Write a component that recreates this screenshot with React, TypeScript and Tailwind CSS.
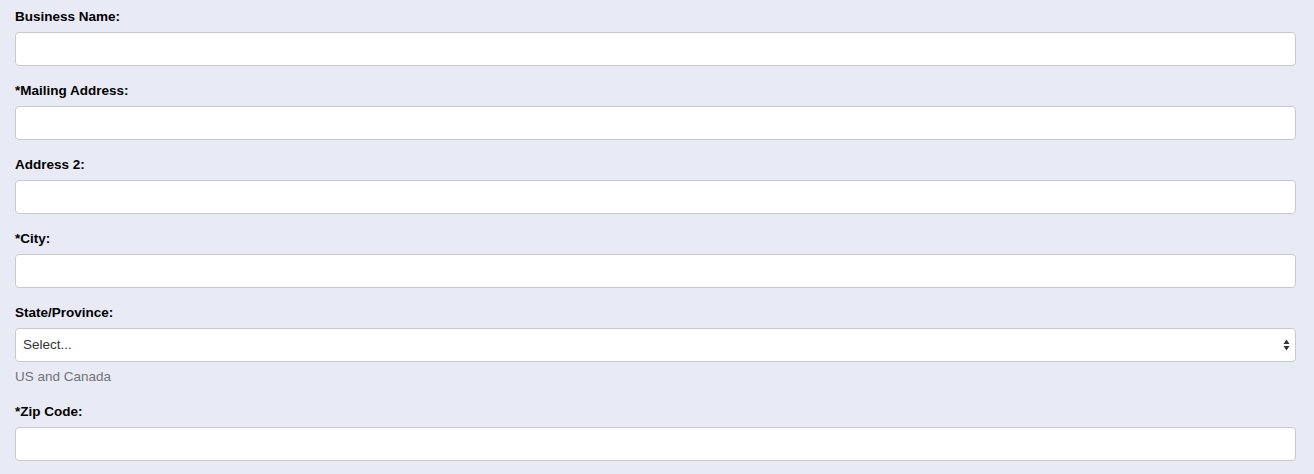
import React from "react";

const fields = [
    { label: "Business Name:", type: "text" },
    { label: "*Mailing Address:", type: "text" },
    { label: "Address 2:", type: "text" },
    { label: "*City:", type: "text" },
    { label: "State/Province:", type: "select", help: "US and Canada" },
    { label: "*Zip Code:", type: "text" },
];

function SelectArrows() {
    return (
        <svg width="7" height="12" viewBox="0 0 7 12" className="pointer-events-none absolute right-[6px] top-1/2 -translate-y-1/2">
            <path d="M3.5 0.5 L6.5 5 L0.5 5 Z" fill="#333" />
            <path d="M3.5 11.5 L6.5 7 L0.5 7 Z" fill="#333" />
        </svg>
    );
}

export default function App() {
    return (
        <div className="min-h-screen bg-[#e8eaf6] pl-[15px] pr-[18px] pt-[7px] pb-[13px] font-['Liberation_Sans',Arial,sans-serif]">
            {fields.map((field, index) => (
                <div key={index} className={field.help ? "" : "mb-[15px] last:mb-0"}>
                    <label className="mb-[5px] block text-[13.5px] font-bold leading-[20px] text-black">
                        {field.label}
                    </label>
                    {field.type === "select" ? (
                        <div className="relative">
                            <select className="block h-[34px] w-full appearance-none rounded-[4px] border border-[#c9c9c9] bg-white pl-[7px] pr-6 text-[13.5px] text-[#333] outline-none">
                                <option>Select...</option>
                            </select>
                            <SelectArrows />
                        </div>
                    ) : (
                        <input type="text" className="block h-[34px] w-full rounded-[4px] border border-[#c9c9c9] bg-white px-[8px] text-[13.5px] text-[#333] outline-none" />
                    )}
                    {field.help && (
                        <p className="mt-[5px] mb-[15px] text-[13.5px] leading-[20px] text-[#737373]">{field.help}</p>
                    )}
                </div>
            ))}
        </div>
    );
}
